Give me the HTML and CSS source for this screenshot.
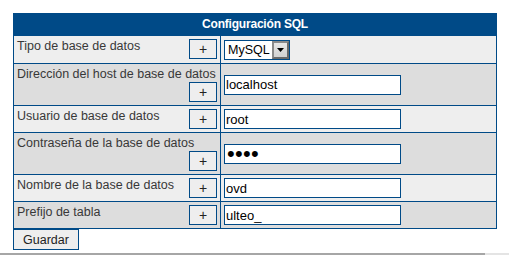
FILE: index.html
```html
<!DOCTYPE html>
<html lang="es">
<head>
<meta charset="utf-8">
<title>Configuración SQL</title>
<link rel="stylesheet" href="styles.css">
</head>
<body>
<form class="config">
  <table class="sql">
    <colgroup><col class="c-label"><col class="c-field"></colgroup>
    <thead>
      <tr><th colspan="2">Configuración SQL</th></tr>
    </thead>
    <tbody>
      <tr class="light">
        <td class="label">Tipo de base de datos<button type="button" class="plus">+</button></td>
        <td class="field">
          <span class="select">
            <select><option>MySQL</option></select>
            <span class="arrow"><svg width="7" height="4" viewBox="0 0 7 4"><path d="M0 0H7L3.5 4Z" fill="#000"/></svg></span>
          </span>
        </td>
      </tr>
      <tr class="dark">
        <td class="label">Dirección del host de base de datos<button type="button" class="plus">+</button></td>
        <td class="field"><input type="text" value="localhost"></td>
      </tr>
      <tr class="light">
        <td class="label">Usuario de base de datos<button type="button" class="plus">+</button></td>
        <td class="field"><input type="text" value="root"></td>
      </tr>
      <tr class="dark">
        <td class="label">Contraseña de la base de datos<button type="button" class="plus">+</button></td>
        <td class="field"><input type="password" class="pass" value="1234"></td>
      </tr>
      <tr class="light">
        <td class="label">Nombre de la base de datos<button type="button" class="plus">+</button></td>
        <td class="field"><input type="text" value="ovd"></td>
      </tr>
      <tr class="dark">
        <td class="label">Prefijo de tabla<button type="button" class="plus">+</button></td>
        <td class="field"><input type="text" value="ulteo_"></td>
      </tr>
    </tbody>
  </table>
  <button type="submit" class="save">Guardar</button>
</form>
<div class="hscroll"><span class="thumb"></span></div>
</body>
</html>
```

FILE: styles.css
```css
html, body {
  margin: 0;
  padding: 0;
  background: #ffffff;
}

body {
  font-family: "Liberation Sans", Arial, sans-serif;
  color: #333333;
}

.config {
  padding: 13px 0 0 13px;
}

.sql {
  border-collapse: collapse;
  width: 484px;
  table-layout: fixed;
}

.c-label { width: 207px; }
.c-field { width: 276px; }

.sql th {
  background: #004a87;
  color: #ffffff;
  font-size: 12px;
  letter-spacing: -0.2px;
  font-weight: bold;
  height: 21px;
  line-height: 21px;
  padding: 0;
  border: 1px solid #004a87;
  text-align: center;
}

.sql td {
  border: 1px solid #004a87;
  padding: 3px;
  font-size: 12.5px;
  line-height: 15px;
}

.light td { background: #eeeeee; }
.dark td { background: #dddddd; }

.label {
  vertical-align: top;
  color: #383838;
}

.field {
  vertical-align: middle;
}

.plus {
  float: right;
  box-sizing: border-box;
  width: 28px;
  height: 20px;
  margin: 0;
  padding: 0;
  border: 1px solid #004a87;
  background: #eeeeee;
  color: #222222;
  font-family: "Liberation Sans", Arial, sans-serif;
  font-size: 14px;
  line-height: 16px;
}

.field input {
  display: block;
  box-sizing: border-box;
  width: 177px;
  height: 20px;
  margin: 0;
  padding: 0 1px;
  border: 1px solid #004a87;
  background: #ffffff;
  color: #000000;
  font-family: "Liberation Sans", Arial, sans-serif;
  font-size: 13px;
  outline: none;
}

.field .pass {
  font-size: 22px;
  letter-spacing: 0.3px;
  padding: 0 0 0 2px;
}

.select {
  display: flex;
  box-sizing: border-box;
  width: 66px;
  height: 20px;
  border: 1px solid #004a87;
  background: #ffffff;
  margin-top: 1px;
}

.select select {
  appearance: none;
  -webkit-appearance: none;
  border: none;
  background: transparent;
  flex: 1;
  min-width: 0;
  margin: 0;
  padding: 0 0 0 3px;
  font-family: "Liberation Sans", Arial, sans-serif;
  font-size: 12.5px;
  color: #000000;
  outline: none;
}

.arrow {
  box-sizing: border-box;
  width: 17px;
  height: 18px;
  border: 2px solid #6a6a6a;
  border-top-color: #8a8a8a;
  border-left-color: #8a8a8a;
  background: linear-gradient(#e6e6e6, #d2d2d2);
  display: flex;
  align-items: center;
  justify-content: center;
}

.save {
  display: block;
  box-sizing: border-box;
  width: 66px;
  height: 21px;
  margin: 0;
  padding: 0;
  border: 1px solid #004a87;
  background: #eeeeee;
  color: #222222;
  font-family: "Liberation Sans", Arial, sans-serif;
  font-size: 12.5px;
}

.hscroll {
  position: fixed;
  left: 0;
  right: 0;
  bottom: 0;
  height: 2px;
  background: #e4e4e4;
}

.hscroll .thumb {
  display: block;
  width: 485px;
  height: 2px;
  background: #a6a6a6;
}
```
